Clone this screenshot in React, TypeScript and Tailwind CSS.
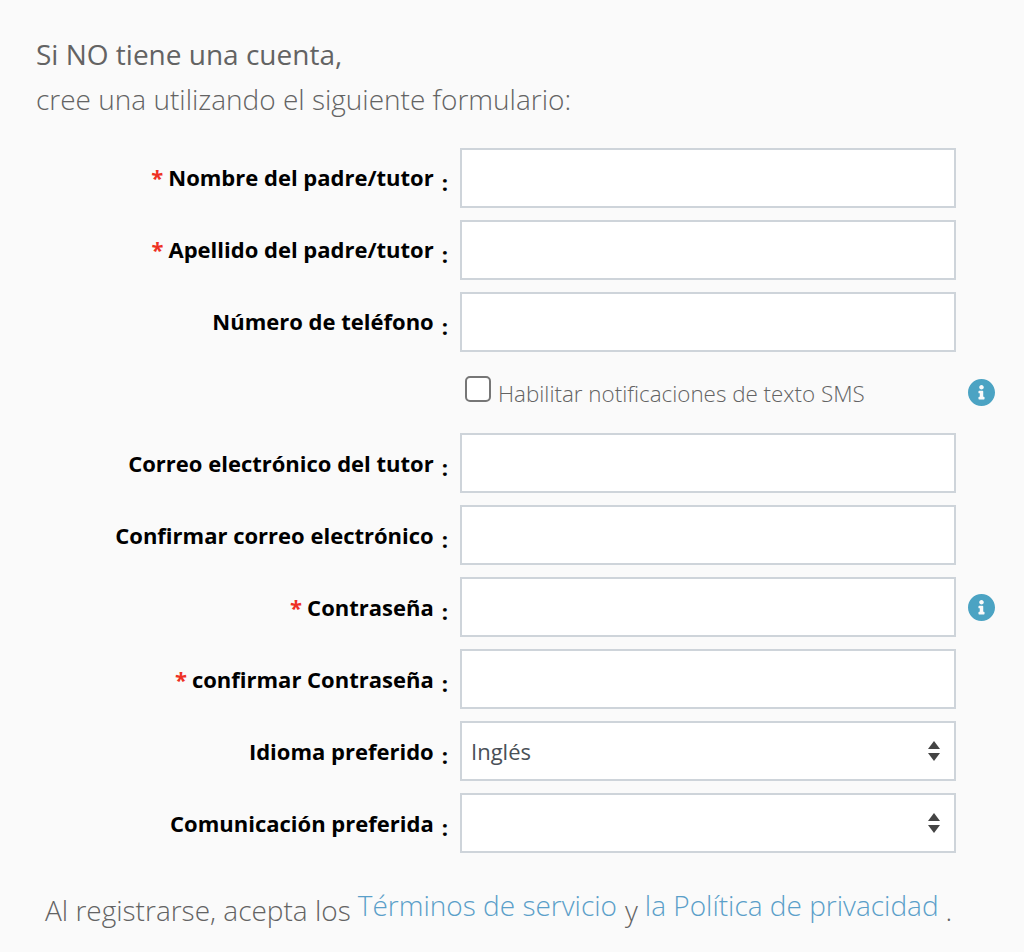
import type { ReactNode } from "react";

type FieldProps = {
  label?: string;
  required?: boolean;
  hint?: boolean;
  raised?: boolean;
  children?: ReactNode;
};

function InfoIcon() {
  return (
    <svg viewBox="8 8 496 496" className="ml-3 h-[27px] w-[27px] shrink-0" fill="#4ba3c3">
      <path d="M256 8C119 8 8 119.100 8 256c0 137 111 248 248 248s248-111 248-248C504 119.100 393 8 256 8zm0 110c23.200 0 42 18.800 42 42s-18.800 42-42 42-42-18.800-42-42 18.800-42 42-42zm56 254c0 6.600-5.400 12-12 12h-88c-6.600 0-12-5.400-12-12v-24c0-6.600 5.400-12 12-12h12v-64h-12c-6.600 0-12-5.400-12-12v-24c0-6.600 5.400-12 12-12h64c6.600 0 12 5.400 12 12v100h12c6.600 0 12 5.400 12 12v24z" />
    </svg>
  );
}

function SelectArrows() {
  return (
    <svg viewBox="0 0 12 20" className="mr-[14px] h-5 w-3" fill="#444444">
      <path d="M0 8 6 0l6 8zM0 12l6 8 6-8z" />
    </svg>
  );
}

function Field({ label, required, hint, raised, children }: FieldProps) {
  return (
    <div className="flex h-[60px] items-center">
      <label className="flex w-[448px] items-center justify-end text-[22px] font-bold leading-[30px] text-black">
        <span className={raised ? "pb-[2px]" : ""}>
          {required && <span className="mr-[5px] text-[#ee3124]">*</span>}
          {label}
        </span>
        <span className="ml-2 mt-[7px]">:</span>
      </label>
      <div className="ml-3 flex h-[60px] w-[496px] items-center justify-between border-2 border-[#ced4da] bg-white text-[22px] text-[#495057]">
        {children}
      </div>
      {hint && <InfoIcon />}
    </div>
  );
}

export default function App() {
  return (
    <main className="h-[952px] w-[1024px] overflow-hidden bg-[#fafafa] font-['Open_Sans',sans-serif] text-[#636363]">
      <header className="pl-9 pt-8 text-[28px] leading-[45px]">
        <h1>Si NO tiene una cuenta,</h1>
        <p className="font-light">cree una utilizando el siguiente formulario:</p>
      </header>
      <form className="mt-[26px] flex flex-col gap-3">
        <Field label="Nombre del padre/tutor" required raised />
        <Field label="Apellido del padre/tutor" required raised />
        <Field label="Número de teléfono" raised />
        <div className="flex h-[57px] items-center pl-[465px]">
          <input type="checkbox" className="mb-2 h-[26px] w-[26px] shrink-0 appearance-none rounded-[5px] border-2 border-[#767676] bg-white" />
          <span className="ml-[7px] w-[458px] pt-[2px] text-[22.4px] font-light">Habilitar notificaciones de texto SMS</span>
          <InfoIcon />
        </div>
        <Field label="Correo electrónico del tutor" />
        <Field label="Confirmar correo electrónico" />
        <Field label="Contraseña" required hint />
        <Field label="confirmar Contraseña" required />
        <Field label="Idioma preferido">
          <span className="ml-[9px]">Inglés</span>
          <SelectArrows />
        </Field>
        <Field label="Comunicación preferida">
          <span />
          <SelectArrows />
        </Field>
      </form>
      <footer className="mt-[31px] flex pl-[45px] text-[28px] font-light leading-[42px]">
        <span className="mt-[5px]">Al registrarse, acepta los</span>
        <a className="ml-[7px] text-[#5a9fc9]">Términos de servicio</a>
        <span className="ml-2 mt-[5px]">y</span>
        <a className="ml-[7px] text-[#5a9fc9]">la Política de privacidad</a>
        <span className="ml-[7px] mt-[5px]">.</span>
      </footer>
    </main>
  );
}
